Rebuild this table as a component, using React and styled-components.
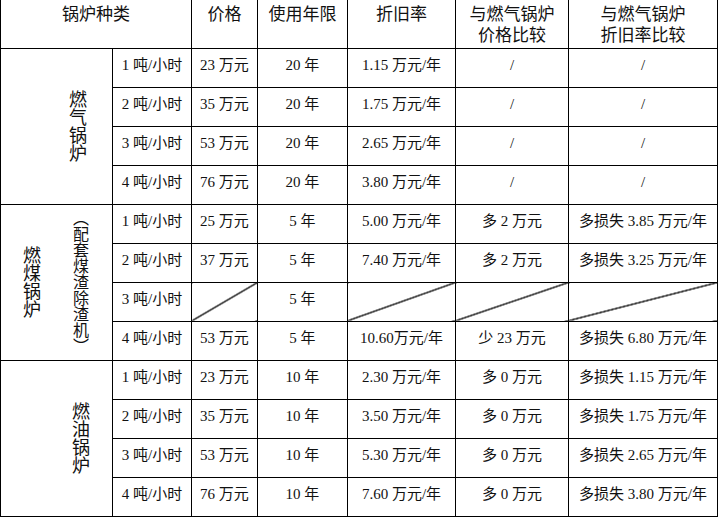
import React from 'react';
import styled, { createGlobalStyle, css } from 'styled-components';

const GlobalStyle = createGlobalStyle`
  html, body {
    margin: 0;
    padding: 0;
    background: #fff;
  }
  body {
    font-family: "Liberation Serif", "Noto Sans CJK SC", serif;
  }
`;

const Table = styled.table`
  border-collapse: collapse;
  table-layout: fixed;
  width: 717px;
  color: #111;
`;

const HeadRow = styled.tr`
  height: 48px;
`;

const Row = styled.tr`
  height: 39px;
`;

const HeadCell = styled.th`
  border: 1px solid #000;
  border-top: none;
  padding: 2px 0 0;
  vertical-align: top;
  text-align: center;
  font-family: "Noto Sans CJK SC", sans-serif;
  font-weight: 400;
  font-size: 17px;
  line-height: 21px;
  color: #111;
`;

const Cell = styled.td`
  border: 1px solid #000;
  padding: 6px 0 0;
  vertical-align: top;
  text-align: center;
  font-size: 15px;
  line-height: 20px;
  white-space: nowrap;

  ${(p) =>
    p.$slash &&
    css`
      background: linear-gradient(
        to bottom right,
        transparent calc(50% - 0.9px),
        #000 calc(50% - 0.4px),
        #000 calc(50% + 0.4px),
        transparent calc(50% + 0.9px)
      );
    `}
`;

const LabelCell = styled.td`
  border: 1px solid #000;
  padding: 0;
  vertical-align: middle;
`;

const LabelBox = styled.div`
  display: flex;
  justify-content: flex-end;
  align-items: center;
  gap: 31px;
  padding-right: ${(p) => p.$right}px;
`;

const VerticalText = styled.span`
  writing-mode: vertical-rl;
  font-family: "Noto Sans CJK SC", sans-serif;
  font-size: ${(p) => (p.$small ? 16 : 18)}px;
  line-height: 18px;
  color: #111;
`;

const columns = [112, 79, 66, 90, 108, 113, 149];

const groups = [
  {
    labels: ['燃气锅炉'],
    right: 25,
    rows: [
      ['1 吨/小时', '23 万元', '20 年', '1.15 万元/年', '/', '/'],
      ['2 吨/小时', '35 万元', '20 年', '1.75 万元/年', '/', '/'],
      ['3 吨/小时', '53 万元', '20 年', '2.65 万元/年', '/', '/'],
      ['4 吨/小时', '76 万元', '20 年', '3.80 万元/年', '/', '/'],
    ],
  },
  {
    labels: ['燃煤锅炉', '（配套煤渣除渣机）'],
    right: 22,
    rows: [
      ['1 吨/小时', '25 万元', '5 年', '5.00 万元/年', '多 2 万元', '多损失 3.85 万元/年'],
      ['2 吨/小时', '37 万元', '5 年', '7.40 万元/年', '多 2 万元', '多损失 3.25 万元/年'],
      ['3 吨/小时', null, '5 年', null, null, null],
      ['4 吨/小时', '53 万元', '5 年', '10.60万元/年', '少 23 万元', '多损失 6.80 万元/年'],
    ],
  },
  {
    labels: ['燃油锅炉'],
    right: 22,
    rows: [
      ['1 吨/小时', '23 万元', '10 年', '2.30 万元/年', '多 0 万元', '多损失 1.15 万元/年'],
      ['2 吨/小时', '35 万元', '10 年', '3.50 万元/年', '多 0 万元', '多损失 1.75 万元/年'],
      ['3 吨/小时', '53 万元', '10 年', '5.30 万元/年', '多 0 万元', '多损失 2.65 万元/年'],
      ['4 吨/小时', '76 万元', '10 年', '7.60 万元/年', '多 0 万元', '多损失 3.80 万元/年'],
    ],
  },
];

export default function App() {
  return (
    <>
      <GlobalStyle />
      <Table>
        <colgroup>
          {columns.map((w, i) => (
            <col key={i} style={{ width: w }} />
          ))}
        </colgroup>
        <thead>
          <HeadRow>
            <HeadCell colSpan={2}>锅炉种类</HeadCell>
            <HeadCell>价格</HeadCell>
            <HeadCell>使用年限</HeadCell>
            <HeadCell>折旧率</HeadCell>
            <HeadCell>
              与燃气锅炉
              <br />
              价格比较
            </HeadCell>
            <HeadCell>
              与燃气锅炉
              <br />
              折旧率比较
            </HeadCell>
          </HeadRow>
        </thead>
        <tbody>
          {groups.map((g, gi) =>
            g.rows.map((r, ri) => (
              <Row key={`${gi}-${ri}`}>
                {ri === 0 && (
                  <LabelCell rowSpan={g.rows.length}>
                    <LabelBox $right={g.right}>
                      {g.labels.map((l, li) => (
                        <VerticalText key={l} $small={li === 1}>
                          {l}
                        </VerticalText>
                      ))}
                    </LabelBox>
                  </LabelCell>
                )}
                {r.map((v, ci) => (
                  <Cell key={ci} $slash={v === null}>
                    {v}
                  </Cell>
                ))}
              </Row>
            ))
          )}
        </tbody>
      </Table>
    </>
  );
}
